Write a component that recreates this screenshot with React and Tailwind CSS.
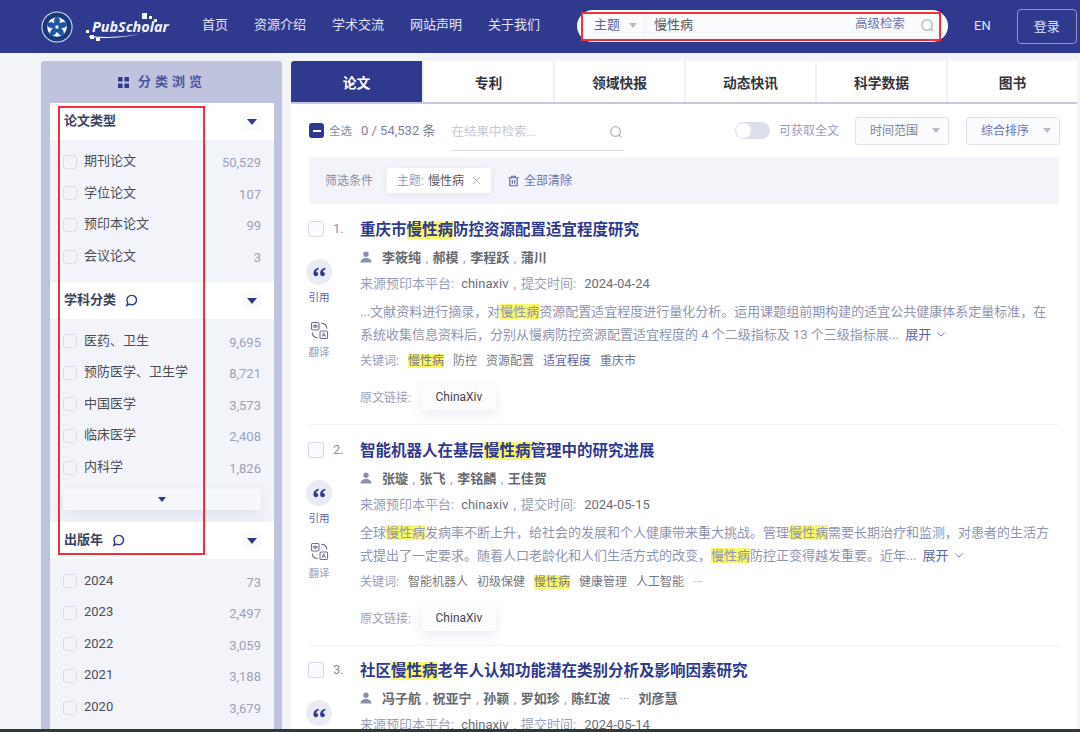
import React from "react";

const Hl = ({ children }) => <span className="bg-[#fbf76b]">{children}</span>;

const Caret = ({ cls = "" }) => (
  <svg viewBox="0 0 10 6" className={cls}><path d="M0 0H10L5 6Z" fill="currentColor" /></svg>
);

const Search = ({ cls = "" }) => (
  <svg viewBox="0 0 16 16" className={cls} fill="none" stroke="currentColor" strokeWidth="1.4"><circle cx="7.5" cy="7.5" r="5.6" /><path d="M11.7 11.7L13.6 13.6" strokeLinecap="round" /></svg>
);

const Chat = () => (
  <svg viewBox="0 0 14 14" className="w-[13px] h-[13px] text-[#2f3a8f]" fill="none" stroke="currentColor" strokeWidth="1.5"><path d="M7.5 1.5a5 5 0 1 1-2.6 9.3L2 12.3l.9-3A5 5 0 0 1 7.5 1.5Z" /></svg>
);

const More = () => (
  <span className="inline-flex items-center ml-[3px] text-[#5b63a8] whitespace-nowrap">
    展开
    <svg viewBox="0 0 10 6" className="ml-[5px] w-[10px] h-[5px]" fill="none" stroke="currentColor" strokeWidth="1"><path d="M0.5 0.5L5 5L9.5 0.5" /></svg>
  </span>
);

function SectionHead({ title, chat }) {
  return (
    <div className="h-[37px] bg-white flex items-center pl-[14px] pr-[13px]">
      <span className="text-[13px] font-bold text-[#3b4260] leading-none -translate-y-[1px]">{title}</span>
      {chat && <span className="ml-[9px] flex"><Chat /></span>}
      <span className="ml-auto w-[18px] h-[18px] flex items-center justify-center bg-[#fafafc] rounded-sm">
        <Caret cls="w-[10px] h-[6px] text-[#2f3a8f]" />
      </span>
    </div>
  );
}

function Row({ label, count }) {
  return (
    <div className="h-[31.6px] flex items-center pl-[13px] pr-[13px]">
      <span className="w-[14px] h-[14px] rounded-[3px] border border-[#dcdeee] shrink-0"></span>
      <span className="ml-[7px] text-[13px] text-[#4a4d57] leading-none -translate-y-[1px]">{label}</span>
      <span className="ml-auto text-[13px] text-[#9aa1b9] leading-none translate-y-[1px]">{count}</span>
    </div>
  );
}

function Sidebar() {
  const types = [["期刊论文", "50,529"], ["学位论文", "107"], ["预印本论文", "99"], ["会议论文", "3"]];
  const subjects = [["医药、卫生", "9,695"], ["预防医学、卫生学", "8,721"], ["中国医学", "3,573"], ["临床医学", "2,408"], ["内科学", "1,826"]];
  const years = [["2024", "73"], ["2023", "2,497"], ["2022", "3,059"], ["2021", "3,188"], ["2020", "3,679"]];
  return (
    <aside className="w-[241px] bg-[#bfc3de] rounded-t-[3px] pl-[9px] pr-[8px] shrink-0 h-[680px] overflow-hidden">
      <div className="h-[42px] flex items-center justify-center text-[#2f3a8f]">
        <svg viewBox="0 0 12 12" className="w-[11px] h-[11px] mr-[9px]" fill="currentColor">
          <rect x="0" y="0" width="5" height="5" rx="0.6" /><rect x="7" y="0" width="5" height="5" rx="0.6" /><rect x="0" y="7" width="5" height="5" rx="0.6" /><rect x="7" y="7" width="5" height="5" rx="0.6" />
        </svg>
        <span className="text-[13px] font-bold tracking-[4px] opacity-80">分类浏览</span>
      </div>
      <div className="bg-[#f3f4f9] h-full">
        <SectionHead title="论文类型" />
        <div className="pt-[6px] pb-[10px]">{types.map((r) => <Row key={r[0]} label={r[0]} count={r[1]} />)}</div>
        <SectionHead title="学科分类" chat />
        <div className="pt-[6px] pb-[12px]">
          {subjects.map((r) => <Row key={r[0]} label={r[0]} count={r[1]} />)}
          <div className="mx-[13px] mt-[6px] h-[21px] bg-[#f6f7fb] rounded-[2px] flex items-center justify-center shadow-[0_6px_14px_rgba(120,130,180,0.14)]">
            <Caret cls="w-[8px] h-[5px] text-[#2f3a8f]" />
          </div>
        </div>
        <SectionHead title="出版年" chat />
        <div className="pt-[6px]">{years.map((r) => <Row key={r[0]} label={r[0]} count={r[1]} />)}</div>
      </div>
    </aside>
  );
}

function Logo() {
  return (
    <div className="flex items-center shrink-0">
      <svg viewBox="0 0 32 32" className="w-[32px] h-[32px]">
        <circle cx="16" cy="16" r="15.6" fill="#dfe6f4" />
        <circle cx="16" cy="16" r="14.6" fill="#17397f" />
        <circle cx="16" cy="16" r="9.8" fill="#fff" />
        {[0, 72, 144, 216, 288].map((a) => (
          <ellipse key={a} cx="16" cy="10.6" rx="2.9" ry="4.6" fill="#1f55a5" transform={`rotate(${a} 16 16)`} />
        ))}
        <circle cx="16" cy="16" r="1.7" fill="#fff" />
      </svg>
      <div className="relative ml-[13px] w-[84px] h-[32px]">
        <svg viewBox="0 0 84 32" className="absolute inset-0 w-full h-full" fill="#fff">
          <path d="M3 25C24 27 46 26 62 20 46 26.5 24 28 3 26.2Z" />
          <rect x="56" y="2" width="5" height="6" /><rect x="63" y="5" width="3" height="3" /><rect x="68" y="8" width="3" height="3" />
          <rect x="-1" y="19" width="4" height="3" /><rect x="4" y="24" width="4" height="4" /><rect x="10" y="27" width="4" height="3" />
        </svg>
        <span className="absolute left-[6px] top-[7px] italic font-bold text-[#f2f3fb] text-[14.4px] leading-[18px] font-['Open_Sans',sans-serif] whitespace-nowrap">PubScholar</span>
      </div>
    </div>
  );
}

function Header() {
  const nav = ["首页", "资源介绍", "学术交流", "网站声明", "关于我们"];
  return (
    <header className="h-[53px] bg-[#2f3a8f] flex items-center pl-[41px] shrink-0">
      <Logo />
      <nav className="flex gap-[26px] ml-[32px] shrink-0 -translate-y-[2px]">
        {nav.map((n) => <span key={n} className="text-[13px] text-[#e3e5f3] leading-none whitespace-nowrap">{n}</span>)}
      </nav>
      <div className="relative ml-[37px] w-[371px] h-[32px] bg-[#fafbfc] rounded-full flex items-center shrink-0 -translate-y-[1px]">
        <span className="ml-[17px] text-[13px] text-[#5b63a8] -translate-y-[1px]">主题</span>
        <Caret cls="ml-[9px] w-[8px] h-[5px] text-[#b6b9c8]" />
        <span className="ml-[7px] h-[26px] w-px bg-[#eceef4]"></span>
        <span className="ml-[9px] text-[13px] text-[#55585f] -translate-y-[1px]">慢性病</span>
        <span className="ml-auto text-[12.5px] text-[#6a72b4] -translate-y-[1px]">高级检索</span>
        <Search cls="ml-[15px] mr-[13px] w-[15px] h-[15px] text-[#b4b7c2]" />
        <span className="absolute left-[4px] right-[7px] top-[2px] bottom-[1px] border-2 border-[#f0303c]"></span>
      </div>
      <span className="ml-[26px] text-[13px] text-[#e3e5f3] shrink-0 -translate-y-[1px]">EN</span>
      <span className="ml-[26px] w-[60px] h-[35px] border border-[#8f96c6] rounded-[4px] flex items-center justify-center text-[13px] text-[#e3e5f3] shrink-0">登录</span>
    </header>
  );
}

function Tabs() {
  const t = ["论文", "专利", "领域快报", "动态快讯", "科学数据", "图书"];
  return (
    <div className="grid grid-cols-6 h-[43px] border-b-2 border-[#c3c7e0] bg-white">
      {t.map((x, i) => (
        <div key={x} className={`flex items-center justify-center pt-[3px] text-[13.75px] font-bold ${i === 0 ? "bg-[#2f3a8f] text-white rounded-tl-[3px]" : "text-[#33353b] border-l-2 border-[#eff0f5]"}`}>{x}</div>
      ))}
    </div>
  );
}

function Toolbar() {
  return (
    <div className="flex items-center h-[53px] pl-[18px] pr-[17px]">
      <span className="w-[15px] h-[15px] rounded-[3px] bg-[#2f3a8f] flex items-center justify-center"><span className="w-[8px] h-[2px] bg-white"></span></span>
      <span className="ml-[5px] text-[11.5px] text-[#8a8fa3] translate-y-[1px]">全选</span>
      <span className="ml-[9px] text-[13px] text-[#7d8194]">0 / 54,532 条</span>
      <div className="ml-[16px] w-[173px] h-[36px] border-b border-[#dcdeee] flex items-center justify-between pr-[1px] translate-y-[2px]">
        <span className="text-[12.5px] text-[#c6c8d4]">在结果中检索...</span>
        <Search cls="w-[14px] h-[14px] text-[#b4b9c6]" />
      </div>
      <span className="ml-auto w-[35px] h-[17px] rounded-full bg-[#dcdeea] flex items-center pl-[1px]"><span className="w-[15px] h-[15px] rounded-full bg-white"></span></span>
      <span className="ml-[9px] text-[12px] text-[#9aa0b8]">可获取全文</span>
      <span className="ml-[16px] w-[94px] h-[28px] rounded-[3px] border border-[#dfe1ee] bg-[#fafbfd] flex items-center pl-[14px] text-[12px] text-[#7f8292]">时间范围<Caret cls="ml-[14px] w-[8px] h-[5px] text-[#b6b9c8]" /></span>
      <span className="ml-[17px] w-[94px] h-[28px] rounded-[3px] border border-[#dfe1ee] bg-[#fafbfd] flex items-center pl-[14px] text-[12px] text-[#6a72b4]">综合排序<Caret cls="ml-[14px] w-[8px] h-[5px] text-[#b6b9c8]" /></span>
    </div>
  );
}

function Filters() {
  return (
    <div className="ml-[18px] mr-[18px] h-[47px] bg-[#f3f4f9] rounded-[3px] flex items-center pl-[16px]">
      <span className="text-[12px] text-[#8a8fa3]">筛选条件</span>
      <span className="ml-[14px] h-[25px] px-[10px] bg-white rounded-[2px] shadow-[0_2px_6px_rgba(120,130,180,0.12)] flex items-center text-[12px]">
        <span className="text-[#9aa0b8]">主题:</span>
        <span className="ml-[4px] text-[#55585f]">慢性病</span>
        <svg viewBox="0 0 10 10" className="ml-[8px] w-[9px] h-[9px] text-[#a2a7bc]" fill="none" stroke="currentColor"><path d="M1 1L9 9M9 1L1 9" /></svg>
      </span>
      <svg viewBox="0 0 12 12" className="ml-[17px] w-[11px] h-[12px] text-[#5b63a8]" fill="none" stroke="currentColor" strokeWidth="1.2"><path d="M0.5 2.5H11.5M4 2.5V0.8H8V2.5M2 2.5V11.2H10V2.5M4.7 5V9M7.3 5V9" /></svg>
      <span className="ml-[5px] text-[12px] text-[#6a72b4]">全部清除</span>
    </div>
  );
}

const Quote = () => (
  <span className="w-[26px] h-[26px] rounded-full bg-[#eaebf5] flex items-center justify-center shrink-0">
    <svg viewBox="0 0 14 10" className="w-[13px] h-[10px] text-[#2f3a8f]" fill="currentColor">
      <path d="M6 0.5C3 1 0.5 3.2 0.5 6.4 0.5 8.4 1.6 9.6 3.2 9.6 4.6 9.6 5.6 8.6 5.6 7.2 5.6 5.9 4.7 5 3.4 5 3.6 3.6 4.7 2.5 6.2 2Z" />
      <path d="M13.2 0.5C10.2 1 7.7 3.2 7.7 6.4 7.7 8.4 8.8 9.6 10.4 9.6 11.8 9.6 12.8 8.6 12.8 7.2 12.8 5.9 11.9 5 10.6 5 10.8 3.6 11.9 2.5 13.4 2Z" />
    </svg>
  </span>
);

const Translate = () => (
  <svg viewBox="0 0 20 20" className="w-[19px] h-[19px] text-[#6a7090] shrink-0" fill="none" stroke="currentColor" strokeWidth="1.1">
    <rect x="1.5" y="1.5" width="8" height="8" rx="1.5" />
    <path d="M5.5 3.3V7.5M3.4 4.7H7.6V6.4H3.4Z" strokeWidth="0.9" />
    <rect x="10.5" y="10.5" width="8" height="8" rx="1.5" />
    <path d="M12.6 16.6L14.5 12.3 16.4 16.6M13.3 15.2H15.7" strokeWidth="0.9" />
    <path d="M12 2.5C15 2.5 17.5 4.5 17.7 8M8 17.5C5 17.5 2.5 15.5 2.3 12" />
  </svg>
);

const User = () => (
  <svg viewBox="0 0 12 12" className="w-[12px] h-[12px] text-[#8b91ad]" fill="currentColor"><circle cx="6" cy="3.2" r="2.7" /><path d="M0.5 11.5C0.5 8.5 3 7 6 7S11.5 8.5 11.5 11.5Z" /></svg>
);

const Authors = ({ names }) => (
  <div className="flex items-center h-[20px]">
    <User />
    <span className="ml-[10px] flex items-center text-[13px] font-bold text-[#666970] leading-none">
      {names.map((n, i) => (
        <React.Fragment key={i}>
          {n === "···" ? <span className="mx-[9px] font-normal text-[#9aa0b8]">···</span> : <span>{n}</span>}
          {i < names.length - 1 && n !== "···" && names[i + 1] !== "···" && <span className="mx-[4.5px] font-normal text-[#9aa0b8]">,</span>}
        </React.Fragment>
      ))}
    </span>
  </div>
);

const Meta = ({ date }) => (
  <div className="text-[13px] leading-[20px] mt-[7px] text-[#9aa0b8]">
    来源预印本平台:<span className="ml-[7px] text-[#6d707a]">chinaxiv</span><span className="mx-[5px]">,</span>提交时间:<span className="ml-[8px] text-[#6d707a]">{date}</span>
  </div>
);

function Card({ n, title, authors, date, abs, keywords, showRest = true }) {
  return (
    <article className={`ml-[17px] mr-[18px] flex ${showRest ? "h-[221px] border-b border-[#f1f2f6]" : "h-[120px] -mt-[1px]"} pt-[16px]`}>
      <div className="w-[52px] shrink-0">
        <div className="flex items-center h-[18px]">
          <span className="w-[16px] h-[16px] rounded-[3px] border border-[#d8dbec] bg-[#fafbfd]"></span>
          <span className="ml-[9px] text-[13px] text-[#8a8fa3]">{n}.</span>
        </div>
        <div className="mt-[21px] flex flex-col items-center w-[22px] ml-0">
          <Quote />
          {showRest && <span className="mt-[6px] text-[10.5px] leading-[14px] text-[#5b63a8] whitespace-nowrap">引用</span>}
          {showRest && <span className="mt-[16px] flex"><Translate /></span>}
          {showRest && <span className="mt-[6px] text-[10.5px] leading-[14px] text-[#9aa0b8] whitespace-nowrap">翻译</span>}
        </div>
      </div>
      <div className="flex-1 min-w-0">
        <h3 className="text-[15.5px] font-bold text-[#2f3a8f] leading-[20px]">{title}</h3>
        <div className="mt-[7px]"><Authors names={authors} /></div>
        <Meta date={date} />
        {showRest && <p className="mt-[6px] text-[13px] leading-[23px] text-[#8f95ae] w-[690px]">{abs}</p>}
        {showRest && (
          <div className="mt-[5px] h-[20px] flex items-center text-[12px] text-[#9aa0b8]">
            关键词:
            {keywords.map((k, i) => <span key={i} className="ml-[9px] text-[#75787f]">{k}</span>)}
          </div>
        )}
        {showRest && (
          <div className="mt-[14px] flex items-center text-[12px] text-[#9aa0b8]">
            原文链接:
            <span className="ml-[11px] w-[74px] h-[26px] bg-[#fdfdfe] rounded-[2px] shadow-[0_4px_12px_rgba(120,130,180,0.15)] flex items-center justify-center text-[#45474f] -translate-y-[1px]">ChinaXiv</span>
          </div>
        )}
      </div>
    </article>
  );
}

function Results() {
  return (
    <main className="flex-1 ml-[9px] min-w-0 bg-white h-[680px] overflow-hidden">
      <Tabs />
      <Toolbar />
      <Filters />
      <Card n={1}
        title={<>重庆市<Hl>慢性病</Hl>防控资源配置适宜程度研究</>}
        authors={["李筱纯", "郝模", "李程跃", "蒲川"]}
        date="2024-04-24"
        abs={<>...文献资料进行摘录，对<Hl>慢性病</Hl>资源配置适宜程度进行量化分析。运用课题组前期构建的适宜公共健康体系定量标准，在系统收集信息资料后，分别从慢病防控资源配置适宜程度的 4 个二级指标及 13 个三级指标展... <More /></>}
        keywords={[<Hl>慢性病</Hl>, "防控", "资源配置", <span className="text-[#5b63a8]">适宜程度</span>, "重庆市"]}
      />
      <Card n={2}
        title={<>智能机器人在基层<Hl>慢性病</Hl>管理中的研究进展</>}
        authors={["张璇", "张飞", "李铭麟", "王佳贺"]}
        date="2024-05-15"
        abs={<>全球<Hl>慢性病</Hl>发病率不断上升，给社会的发展和个人健康带来重大挑战。管理<Hl>慢性病</Hl>需要长期治疗和监测，对患者的生活方式提出了一定要求。随着人口老龄化和人们生活方式的改变，<Hl>慢性病</Hl>防控正变得越发重要。近年... <More /></>}
        keywords={["智能机器人", "初级保健", <Hl>慢性病</Hl>, "健康管理", "人工智能", <span className="text-[#a2a7bc]">···</span>]}
      />
      <Card n={3} showRest={false}
        title={<>社区<Hl>慢性病</Hl>老年人认知功能潜在类别分析及影响因素研究</>}
        authors={["冯子航", "祝亚宁", "孙颖", "罗如珍", "陈红波", "···", "刘彦慧"]}
        date="2024-05-14"
      />
    </main>
  );
}

export default function App() {
  return (
    <div className="relative w-[1080px] h-[732px] overflow-hidden bg-[#f3f4f8] flex flex-col font-['Roboto','Noto_Sans_CJK_SC',sans-serif]">
      <Header />
      <div className="flex flex-1 min-h-0 pl-[41px] pr-[3px] pt-[8px]">
        <Sidebar />
        <Results />
      </div>
      <div className="h-[3px] bg-[#2b3b3c] shrink-0"></div>
      <span className="absolute left-[58px] top-[106px] w-[147px] h-[449px] border-2 border-[#f0303c] pointer-events-none"></span>
    </div>
  );
}
